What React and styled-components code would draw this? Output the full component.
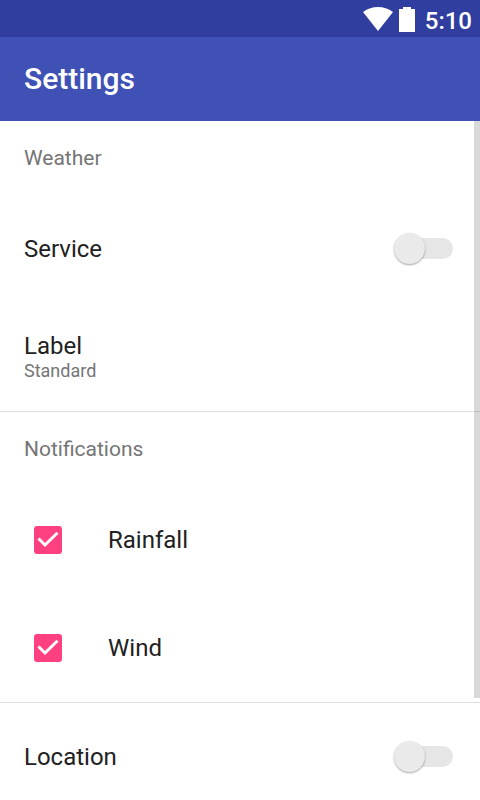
import React from "react";
import styled, { createGlobalStyle } from "styled-components";

const Global = createGlobalStyle`
  *, *::before, *::after { box-sizing: border-box; }
  html, body, #root { height: 100%; }
  body {
    margin: 0;
    background: #fff;
    color: #212121;
    font-family: Roboto, "Liberation Sans", sans-serif;
  }
`;

const Screen = styled.div`
  display: flex;
  flex-direction: column;
  height: 100%;
  overflow: hidden;
`;

const StatusBar = styled.div`
  display: flex;
  flex: none;
  align-items: flex-start;
  justify-content: flex-end;
  height: 37px;
  padding: 7px 8px 0 0;
  background: #303f9f;
  color: #fff;
`;

const WifiIcon = styled.svg`
  width: 30px;
  height: 24px;
  margin-right: 6px;
`;

const BatteryIcon = styled.svg`
  width: 16px;
  height: 25px;
  margin-right: 10px;
`;

const Clock = styled.time`
  font-size: 24px;
  font-weight: 500;
  line-height: 28px;
`;

const AppBar = styled.header`
  display: flex;
  flex: none;
  align-items: center;
  height: 84px;
  padding: 0 24px;
  background: #3f51b5;
  color: #fff;
`;

const Title = styled.h1`
  margin: 0;
  font-size: 30px;
  font-weight: 500;
  line-height: 36px;
`;

const Body = styled.div`
  display: flex;
  flex: 1;
  min-height: 0;
  align-items: flex-start;
`;

const Content = styled.main`
  flex: 1;
  margin-right: -6px;
`;

const ScrollThumb = styled.div`
  flex: none;
  width: 6px;
  height: 85%;
  background: rgba(0, 0, 0, 0.15);
  z-index: 1;
`;

const Section = styled.section`
  & + & { border-top: 1px solid #e0e0e0; }
`;

const SectionTitle = styled.h2`
  margin: 0;
  padding: 25px 24px;
  color: #757575;
  font-size: 21px;
  font-weight: 400;
  line-height: 24px;
`;

const Row = styled.label`
  display: flex;
  align-items: center;
  height: 108px;
  padding: 0 24px;
  font-size: 24px;
  line-height: 30px;
`;

const RowText = styled.span`
  flex: 1;
`;

const ValueRow = styled.button`
  display: block;
  width: 100%;
  height: 108px;
  padding: 28px 24px 30px;
  border: 0;
  background: none;
  color: inherit;
  font: inherit;
  font-size: 24px;
  line-height: 30px;
  text-align: left;
`;

const Value = styled.span`
  display: block;
  color: #757575;
  font-size: 18px;
  line-height: 20px;
`;

const Switch = styled.input`
  appearance: none;
  display: flex;
  align-items: center;
  width: 59px;
  height: 21px;
  margin: 0 3px 2px 0;
  border-radius: 11px;
  background: linear-gradient(#e6e6e6, #e6e6e6) right / 44px 21px no-repeat;

  &::before {
    content: "";
    width: 31px;
    height: 31px;
    flex: none;
    border-radius: 50%;
    background: #eaeaea;
    box-shadow: 0 1px 2px rgba(0, 0, 0, 0.35);
  }
  &:checked { justify-content: flex-end; }
`;

const CheckControl = styled.span`
  display: grid;
  flex: none;
  width: 48px;
  height: 48px;
  margin-right: 36px;
  place-items: center;
`;

const CheckInput = styled.input`
  appearance: none;
  grid-area: 1 / 1;
  width: 28px;
  height: 28px;
  margin: 0;
  border: 3px solid #757575;
  border-radius: 3px;
  &:checked { border: 0; background: #ff4081; }
  &:not(:checked) + svg { visibility: hidden; }
`;

const CheckMark = styled.svg`
  grid-area: 1 / 1;
  width: 28px;
  height: 28px;
  pointer-events: none;
`;

function CheckRow({ children }) {
  return (
    <Row>
      <CheckControl>
        <CheckInput type="checkbox" defaultChecked />
        <CheckMark viewBox="0 0 28 28" aria-hidden="true">
          <path d="M4.5 12.5 11 19 23.5 6.8" fill="none" stroke="#fff" strokeWidth="3" />
        </CheckMark>
      </CheckControl>
      <RowText>{children}</RowText>
    </Row>
  );
}

function SwitchRow({ children }) {
  return (
    <Row>
      <RowText>{children}</RowText>
      <Switch type="checkbox" role="switch" />
    </Row>
  );
}

export default function App() {
  return (
    <>
      <Global />
      <Screen>
        <StatusBar>
          <WifiIcon viewBox="0 0 30 24" aria-hidden="true">
            <path d="M0 5C9-1.6 21-1.6 30 5L15 24Z" fill="currentColor" />
          </WifiIcon>
          <BatteryIcon viewBox="0 0 16 25" aria-hidden="true">
            <path d="M4 0h8v2h4v23H0V2h4Z" fill="currentColor" />
          </BatteryIcon>
          <Clock>5:10</Clock>
        </StatusBar>
        <AppBar>
          <Title>Settings</Title>
        </AppBar>
        <Body>
          <Content>
            <Section>
              <SectionTitle>Weather</SectionTitle>
              <SwitchRow>Service</SwitchRow>
              <ValueRow type="button">
                Label
                <Value>Standard</Value>
              </ValueRow>
            </Section>
            <Section>
              <SectionTitle>Notifications</SectionTitle>
              <CheckRow>Rainfall</CheckRow>
              <CheckRow>Wind</CheckRow>
            </Section>
            <Section>
              <SwitchRow>Location</SwitchRow>
            </Section>
          </Content>
          <ScrollThumb />
        </Body>
      </Screen>
    </>
  );
}
